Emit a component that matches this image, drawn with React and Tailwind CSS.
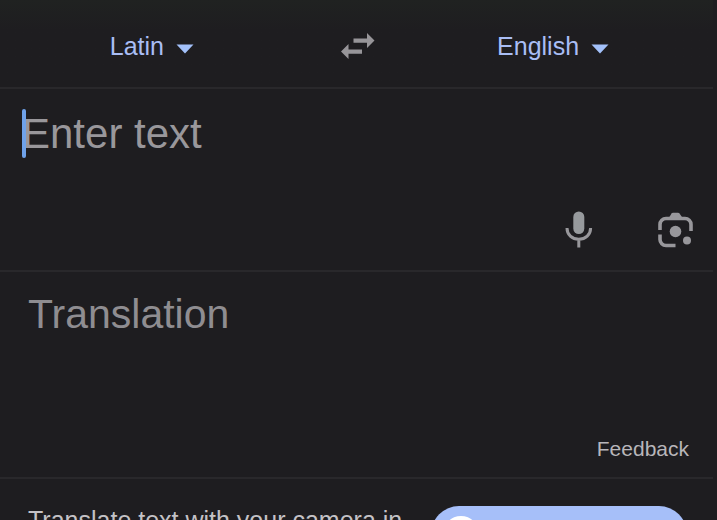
import React from 'react';

const LANGUAGES = ['Latin', 'English', 'French', 'German', 'Spanish'];

function LanguageSelect({ label, defaultValue }) {
    return (
        <div className="relative flex items-center">
            <select
                aria-label={label}
                defaultValue={defaultValue}
                className="field-sizing-content appearance-none bg-transparent pr-[30px] text-[25px] leading-9 text-[#a9bdf5] outline-none"
            >
                {LANGUAGES.map((language) => (
                    <option key={language}>{language}</option>
                ))}
            </select>
            <svg viewBox="0 0 18 10" className="pointer-events-none absolute right-0 top-4 h-[10px] w-[18px] fill-[#a3c1fa]">
                <path d="M0.5 0.5h17L9 9.5z" />
            </svg>
        </div>
    );
}

function SwapIcon() {
    return (
        <svg viewBox="0 0 34 26" className="h-[26px] w-[34px] fill-[#979599]">
            <path d="M12.5 5.4H26V0L33.5 7.5 26 15V9.7H12.5z" />
            <path d="M21 16.4H7.5V11L0 18.5 7.5 26V20.7H21z" />
        </svg>
    );
}

function MicIcon() {
    return (
        <svg viewBox="0 0 28 37" className="h-[37px] w-[28px]">
            <rect x="8.3" y="0.5" width="11" height="22.5" rx="5.5" fill="#979a9d" />
            <path d="M2 17c0 6.800 5 11.300 11.800 11.300S25.600 23.800 25.600 17M13.800 28v8.500" fill="none" stroke="#98979b" strokeWidth="3" />
        </svg>
    );
}

function LensIcon() {
    return (
        <svg viewBox="0 0 35 36" className="h-[36px] w-[35px]">
            <path d="M2 18v-5.500a6 6 0 0 1 6-6h19a6 6 0 0 1 6 6V19M2 22.500v5a6 6 0 0 0 6 6h9.500" fill="none" stroke="#98979b" strokeWidth="3.6" />
            <path d="M10.500 6.500l3-5q.5-.7 1.500-.7h5q1 0 1.500.7L25 6.500z" fill="#98979b" />
            <circle cx="17.5" cy="19.5" r="5.8" fill="#98979b" />
            <circle cx="29" cy="28.5" r="4" fill="#98979b" />
        </svg>
    );
}

function App() {
    return (
        <main className="flex h-screen flex-col overflow-hidden bg-[#1e1d20] font-['Liberation_Sans',Arial,sans-serif]">

            {/* Language bar */}
            <header className="mr-1 grid h-[89px] shrink-0 grid-cols-[3fr_1fr_3fr] items-center justify-items-center border-b-2 border-[#29282b] bg-linear-to-b from-[#202221] to-[#1e1d20] to-35% pl-1 pt-1">
                <div className="pr-2">
                    <LanguageSelect label="Source language" defaultValue="Latin" />
                </div>
                <button type="button" aria-label="Swap languages">
                    <SwapIcon />
                </button>
                <div className="pr-4">
                    <LanguageSelect label="Target language" defaultValue="English" />
                </div>
            </header>

            {/* Source text */}
            <section className="mr-1 flex h-[183px] shrink-0 flex-col justify-between border-b-2 border-[#29282b] pb-[22px] pl-[22px] pr-5 pt-5">
                <div className="relative flex items-center">
                    <span className="absolute left-0 h-[49px] w-1 rounded-sm bg-[#6fa2ea]" />
                    <input
                        type="text"
                        aria-label="Text to translate"
                        placeholder="Enter text"
                        className="h-[49px] w-full bg-transparent text-[42px] text-[#99979b] outline-none placeholder:text-[#99979b]"
                    />
                </div>
                <div className="flex items-center justify-end gap-[65px]">
                    <button type="button" aria-label="Speak">
                        <MicIcon />
                    </button>
                    <button type="button" aria-label="Search with camera">
                        <LensIcon />
                    </button>
                </div>
            </section>

            {/* Translated text */}
            <section className="mr-1 flex h-[207px] shrink-0 flex-col justify-between border-b-2 border-[#29282b] pb-4 pl-7 pr-6 pt-[18px]">
                <p className="text-[41px] leading-[49px] text-[#8f8d91]">Translation</p>
                <a href="#feedback" className="self-end text-[21px] leading-6 text-[#b8b6ba]">Feedback</a>
            </section>

            {/* Camera promo, runs past the bottom edge */}
            <section className="flex shrink-0 items-start justify-between gap-5 pl-7 pr-[30px] pt-[27px]">
                <p className="text-[25px] leading-7 text-[#c4c2c6]">
                    Translate text with your camera in Google Lens
                </p>
                <button type="button" aria-label="Open Google Lens" className="flex h-14 w-64 shrink-0 items-center rounded-full bg-[#a6bff9] px-3">
                    <span className="h-9 w-9 rounded-full bg-white" />
                </button>
            </section>
        </main>
    );
}

export default App;
